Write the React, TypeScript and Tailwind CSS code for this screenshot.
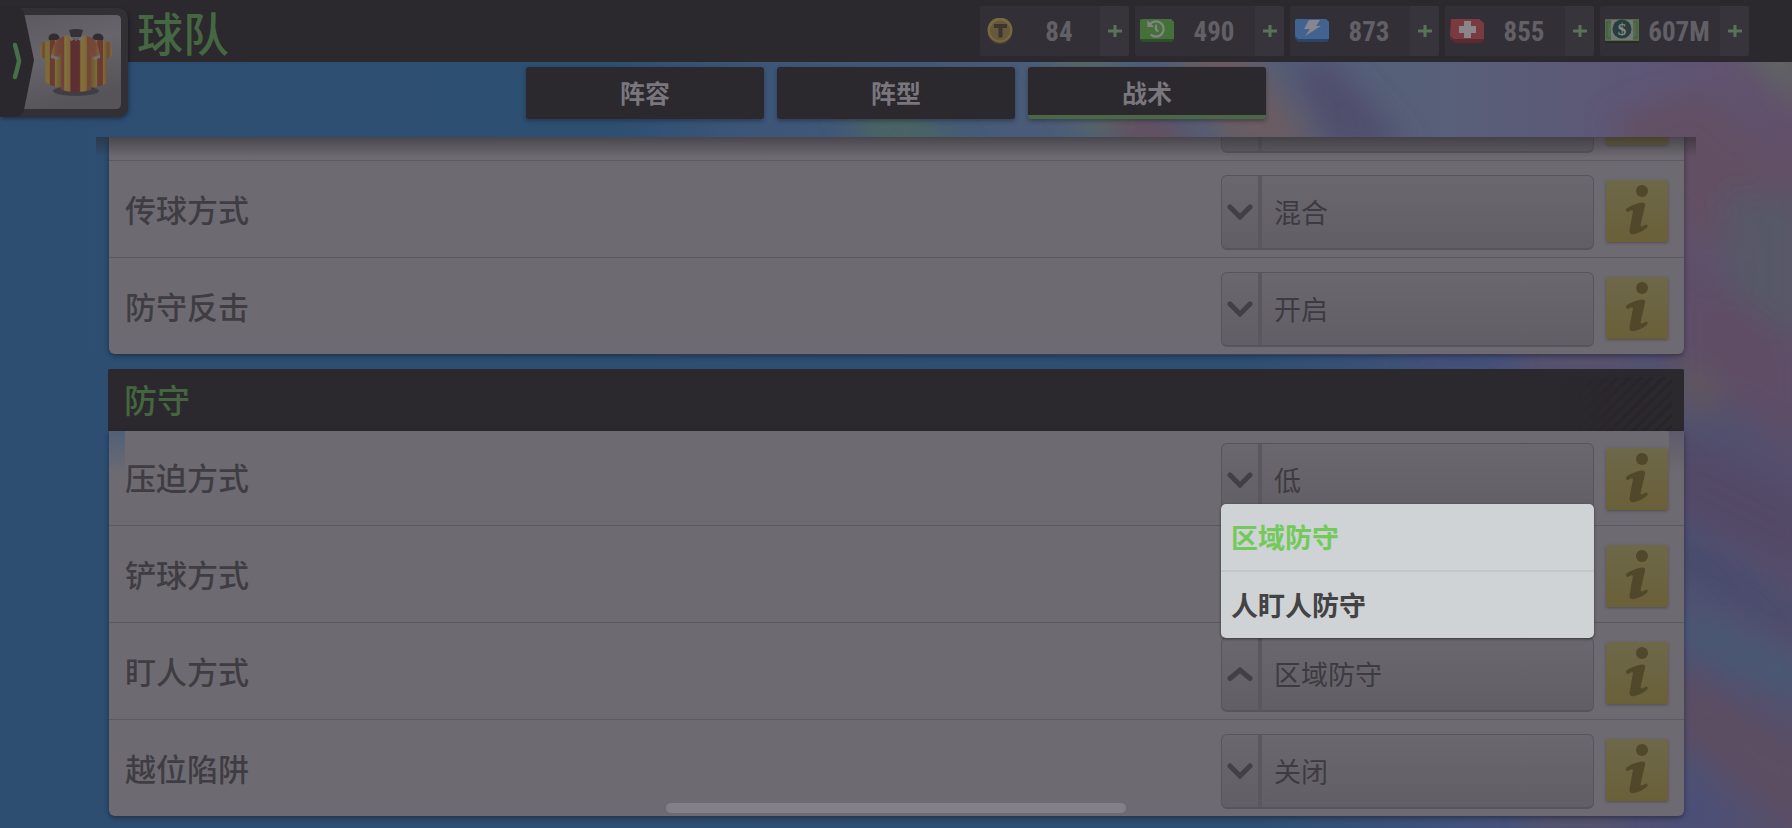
import React, { useState } from 'react';
import { FaHistory } from 'react-icons/fa';

const CoinIcon = () => (
  <svg viewBox="0 0 36 26" className="w-9 h-[26px]">
    <circle cx="16" cy="14" r="12" fill="#4e4433" />
    <circle cx="16" cy="12" r="12.5" fill="#77683f" />
    <circle cx="16" cy="12.5" r="10" fill="#66583a" />
    <path d="M10 6h13v4h-4.5v9.5h-4V10H10z" fill="#3c3532" />
  </svg>
);

const TimeIcon = () => (
  <span className="relative block w-9 h-[26px]">
    <svg viewBox="0 0 36 26" className="w-9 h-[26px]">
      <path d="M1 3q0-2 2-2h29l3 3v17l-2 3H3l-2-2z" fill="#2f4f2c" />
      <path d="M1 3q0-2 2-2h29l3 3v17H1z" fill="#45703a" />
    </svg>
    <FaHistory className="absolute left-2 top-0.5 text-[18px] text-[#7f8580]" />
  </span>
);

const EnergyIcon = () => (
  <svg viewBox="0 0 36 26" className="w-9 h-[26px]">
    <path d="M1 3q0-2 2-2h29l3 3v17l-2 3H4l-3-3z" fill="#2d4468" />
    <path d="M1 3q0-2 2-2h29l3 3v17H4l-3-3z" fill="#42638f" />
    <path d="M15 2h11l-4 6h5L11 18l5-7h-6z" fill="#86868f" />
  </svg>
);

const HealthIcon = () => (
  <svg viewBox="0 0 36 26" className="w-9 h-[26px]">
    <path d="M2 1h28l5 4v17l-2 3H6l-5-4z" fill="#592a30" />
    <path d="M2 1h28l5 4v16H5l-4-3z" fill="#7a3b40" />
    <path d="M15 3h7v5h5v7h-5v5h-7v-5h-5V8h5z" fill="#8b8588" />
  </svg>
);

const CashIcon = () => (
  <svg viewBox="0 0 36 26" className="w-9 h-[26px]">
    <path d="M1 23h34v2H1z" fill="#252b29" />
    <path d="M1 1h34v22H1z" fill="#536b48" />
    <path d="M3 4h30v16H3z" fill="none" stroke="#425c3c" />
    <path d="M7 2h22v20H7z" fill="#747679" />
    <circle cx="18" cy="11" r="9.5" fill="#263f3c" />
    <text x="18" y="17" textAnchor="middle" fontSize="17" fontWeight="700" fill="#85868a" fontFamily="Liberation Serif, serif">$</text>
  </svg>
);

const RESOURCES = [
  { name: 'T', value: '84', icon: <CoinIcon /> },
  { name: 'time', value: '490', icon: <TimeIcon /> },
  { name: 'energy', value: '873', icon: <EnergyIcon /> },
  { name: 'health', value: '855', icon: <HealthIcon /> },
  { name: 'cash', value: '607M', icon: <CashIcon /> },
];

const ATTACK_ROWS = [
  { id: 'focus', label: '', value: '' },
  { id: 'passing', label: '传球方式', value: '混合' },
  { id: 'counter', label: '防守反击', value: '开启' },
];

const DEFENCE_ROWS = [
  { id: 'pressing', label: '压迫方式', value: '低' },
  { id: 'tackling', label: '铲球方式', value: '普通' },
  { id: 'marking', label: '盯人方式', value: '区域防守', options: ['区域防守', '人盯人防守'] },
  { id: 'offside', label: '越位陷阱', value: '关闭' },
];

const Backdrop = () => (
  <svg
    aria-hidden="true"
    viewBox="0 0 1792 828"
    preserveAspectRatio="none"
    className="absolute inset-0 w-full h-full"
  >
    <defs>
      <linearGradient id="base" x1="0" x2="1">
        <stop offset="0" stopColor="#2d4e71" />
        <stop offset="0.34" stopColor="#2d4f72" />
        <stop offset="0.42" stopColor="#3c5678" />
        <stop offset="0.6" stopColor="#4b5c78" />
        <stop offset="0.8" stopColor="#586079" />
        <stop offset="0.92" stopColor="#5e5676" />
        <stop offset="1" stopColor="#62506a" />
      </linearGradient>
      <linearGradient id="low" x1="0" x2="1">
        <stop offset="0" stopColor="#2d4e71" />
        <stop offset="0.7" stopColor="#2d4f72" />
        <stop offset="0.82" stopColor="#43527a" />
        <stop offset="1" stopColor="#554f6c" />
      </linearGradient>
      <filter id="soft" x="-50%" y="-50%" width="200%" height="200%">
        <feGaussianBlur stdDeviation="15" />
      </filter>
    </defs>
    <rect width="1792" height="828" fill="url(#base)" />
    <rect y="355" width="1792" height="473" fill="url(#low)" />
    <g filter="url(#soft)">
      <path d="M840 105l70-5 60 60h-90z" fill="#4b6463" />
      <path d="M1040 50l70 0 30 90h-50z" fill="#566766" />
      <path d="M1100 110l60 0 50 50h-80z" fill="#65505f" />
      <path d="M1170 50l70-10 80 110h-90z" fill="#6c5c60" />
      <path d="M1290 60l40 0 80 90h-80z" fill="#4f4d6c" />
      <path d="M1610 120l90-30 92 80v90l-110-20z" fill="#624f64" />
      <path d="M1725 30h60l30 90z" fill="#5f6964" />
      <path d="M1725 190l85 10v140l-80-30z" fill="#575968" />
      <path d="M1670 230l60 60 80 60v100l-140-80z" fill="#5e4e66" />
      <path d="M1670 370l30-10 30 40-50 20z" fill="#60575f" />
      <path d="M1670 430l140 70v80l-140-70z" fill="#524a66" />
      <path d="M1670 530l140 90v20l-140-80z" fill="#444a6d" />
      <path d="M1670 600l140 60v50l-140-70z" fill="#4a5873" />
      <path d="M1670 660l140 90v90l-140-110z" fill="#5c4e62" />
      <path d="M1670 770l70 60h-70z" fill="#4a507a" />
      <path d="M1410 350h100v25h-100z" fill="#434f78" />
      <path d="M1520 350h120v25h-120z" fill="#5f5167" />
      <path d="M1530 815h90v20h-90z" fill="#5f5468" />
    </g>
  </svg>
);

const TeamButton = () => (
  <button
    aria-label="球队菜单"
    className="absolute left-0 top-2 w-32 h-[109px] bg-[#322f35] rounded-r-[10px] shadow-[1px_2px_4px_rgba(0,0,0,0.35)]"
  >
    <svg viewBox="0 0 128 109" className="w-32 h-[109px]">
      <defs>
        <linearGradient id="tile" x1="0" y1="0" x2="0.3" y2="1">
          <stop offset="0" stopColor="#5c5a60" />
          <stop offset="0.45" stopColor="#67656b" />
          <stop offset="1" stopColor="#565459" />
        </linearGradient>
        <linearGradient id="shirt" x1="0" x2="1">
          <stop offset="0" stopColor="#7d6939" />
          <stop offset="0.1" stopColor="#734a38" />
          <stop offset="0.26" stopColor="#713f36" />
          <stop offset="0.28" stopColor="#83703b" />
          <stop offset="0.38" stopColor="#7b6738" />
          <stop offset="0.41" stopColor="#5b2e31" />
          <stop offset="0.58" stopColor="#5e3032" />
          <stop offset="0.61" stopColor="#847039" />
          <stop offset="0.72" stopColor="#7d6938" />
          <stop offset="0.74" stopColor="#754537" />
          <stop offset="0.9" stopColor="#734a38" />
          <stop offset="1" stopColor="#7d6939" />
        </linearGradient>
        <linearGradient id="shirtBack" x1="0" x2="1">
          <stop offset="0" stopColor="#7d7239" />
          <stop offset="0.05" stopColor="#6e4934" />
          <stop offset="0.08" stopColor="#7b6c37" />
          <stop offset="0.13" stopColor="#7b6c37" />
          <stop offset="0.14" stopColor="#6b3a32" />
          <stop offset="0.2" stopColor="#6b3a32" />
          <stop offset="0.21" stopColor="#7d6d38" />
          <stop offset="0.28" stopColor="#6d5934" />
          <stop offset="0.72" stopColor="#6d5934" />
          <stop offset="0.79" stopColor="#7d6d38" />
          <stop offset="0.8" stopColor="#6b3a32" />
          <stop offset="0.87" stopColor="#6b3a32" />
          <stop offset="0.88" stopColor="#7b6c37" />
          <stop offset="0.95" stopColor="#6e4934" />
          <stop offset="1" stopColor="#7d7239" />
        </linearGradient>
      </defs>
      <path d="M24 7h92q5 0 5 5v84q0 5-5 5H24z" fill="url(#tile)" />
      <path d="M0 0h18q5 0 7 9l9 43-9 45q-2 12-8 12H0z" fill="#2a272d" />
      <path d="M15 37q4 15 4 16t-4 16" fill="none" stroke="#47704a" strokeWidth="4.5" strokeLinecap="round" />
      <ellipse cx="76" cy="83" rx="23" ry="5" fill="#403e44" />
      <ellipse cx="54" cy="30" rx="5.5" ry="4.5" fill="#302d33" />
      <ellipse cx="98" cy="30" rx="5.5" ry="4.5" fill="#302d33" />
      <path d="M41 35l9-3h52l9 3 1 13-5 3v24q-6 4-16 4H61q-10 0-16-5V51l-5-3z" fill="url(#shirtBack)" />
      <path d="M69 22q7-2 14 0l-2 7H71z" fill="#353137" />
      <path d="M67 27l-9 4q-5 4-7 17l7 3 3-6v37q15 4 30 0V45l3 6 6-3q-2-13-6-17l-9-4q-9 8-18 0z" fill="url(#shirt)" />
      <path d="M68 27l8 6 7-6-2 6-5-2-5 2zM51 47l8 2-1 3-7-2zM93 49l7-2v3l-6 2z" fill="#716e75" />
    </svg>
  </button>
);

const InfoButton = ({ label }: { label: string }) => (
  <button
    aria-label={`${label}说明`}
    className="shrink-0 w-[62px] h-[62px] rounded-xs bg-linear-to-b from-[#6d684a] to-[#6a6038] shadow-[0_1px_3px_rgba(60,55,60,0.6)]"
  >
    <svg viewBox="0 0 62 62" className="w-full h-full" fill="#51472a">
      <ellipse cx="36" cy="11" rx="6" ry="6" />
      <path d="M20 29q6-5 16-6.500 4 0 3 3.500l-4.500 19q0 3 5.500-.5 2 0 1.500 2.500-4.500 5-13 7-5.500 1-5-4l3.500-19q-1-2-5 1-2 .5-2-3z" />
    </svg>
  </button>
);

interface TacticRowProps {
  id: string;
  label: string;
  value: string;
  options?: string[];
}

const TacticRow: React.FC<TacticRowProps> = ({ id, label, value, options }) => {
  const [selected, setSelected] = useState(value);
  const open = Boolean(options);

  return (
    <div className="flex items-end h-[97px] px-4 pb-[7px] border-b border-[#5c5a60] first:h-[95px] last:h-24 last:border-b-0">
      <label htmlFor={id} className="flex-1 pb-[18px] text-[31px] leading-[46px] font-medium text-[#3f3d43]">
        {label}
      </label>
      <div className="relative w-[373px] h-[75px] mr-3 flex rounded-md border border-[#57555b] border-b-2 bg-linear-to-b from-[#6a686e] to-[#615f65]">
        <div className="w-10 shrink-0 flex items-center justify-center border-r-4 border-[#5a585e]">
          <svg viewBox="0 0 26 16" className="w-[26px] h-4" fill="none" stroke="#424046" strokeWidth="5" strokeLinecap="round">
            <path d={open ? 'M3 12.500L13 4l10 8.500' : 'M3 3l10 10L23 3'} />
          </svg>
        </div>
        <select
          id={id}
          value={selected}
          onChange={(e) => setSelected(e.target.value)}
          className="flex-1 min-w-0 appearance-none bg-transparent pl-3 text-[27px] text-[#3d3b41] outline-none"
        >
          {(options ?? [value]).map((o) => (
            <option key={o}>{o}</option>
          ))}
        </select>
        {options && (
          <ul className="absolute z-20 -left-px -right-px bottom-full rounded-[5px] overflow-hidden bg-[#cfd3d6] shadow-[0_1px_3px_rgba(0,0,0,0.5)]">
            {options.map((o) => (
              <li key={o} className="border-t-2 border-[#c3c7ca] first:border-t-0">
                <button
                  onClick={() => setSelected(o)}
                  className={`block w-full h-[66px] px-2.5 text-left text-[27px] font-bold ${
                    o === selected ? 'text-[#73ca5b]' : 'text-[#434343]'
                  }`}
                >
                  {o}
                </button>
              </li>
            ))}
          </ul>
        )}
      </div>
      <div className="flex pb-2">
        <InfoButton label={label} />
      </div>
    </div>
  );
};

export default function App() {
  const [tab, setTab] = useState('战术');

  return (
    <div className="relative h-screen flex flex-col overflow-hidden bg-[#2d4f72] font-['Noto_Sans_CJK_SC',sans-serif]">
      <Backdrop />

      <header className="relative z-10 h-[62px] shrink-0 flex items-center justify-between pl-[137px] pr-[43px] bg-[#2b282e]">
        <TeamButton />
        <h1 className="text-[46px] leading-[60px] font-medium text-[#456741]">球队</h1>
        <div className="flex gap-1.5">
          {RESOURCES.map((r) => (
            <div key={r.name} className="w-[149px] h-[50px] flex items-center rounded-xs bg-[#323036]">
              <div className="w-10 pl-1 shrink-0 flex justify-center">{r.icon}</div>
              <span className="flex-1 pt-0.5 pr-0.5 text-center text-[27px] leading-[50px] font-bold text-[#626066] font-['Liberation_Sans_Narrow','Roboto_Condensed','Liberation_Sans',sans-serif]">
                {r.value}
              </span>
              <button aria-label={`${r.name} +`} className="w-[29px] h-full flex items-center justify-center bg-[#37353b] rounded-r-xs">
                <svg viewBox="0 0 14 14" className="w-3.5 h-3.5" stroke="#587357" strokeWidth="3">
                  <path d="M7 1v12M0 7h14" />
                </svg>
              </button>
            </div>
          ))}
        </div>
      </header>

      <nav className="relative shrink-0 h-[75px] flex justify-center gap-[13px] pt-[5px]">
        {['阵容', '阵型', '战术'].map((t) => (
          <button
            key={t}
            onClick={() => setTab(t)}
            className={`w-[238px] h-[52px] rounded-[3px] bg-[#2b282e] text-[25px] font-bold text-[#79777d] shadow-[0_2px_4px_rgba(20,20,30,0.4)] ${
              tab === t ? 'border-b-4 border-[#4b6846] pt-1' : ''
            }`}
          >
            {t}
          </button>
        ))}
      </nav>

      <main className="relative flex-1 min-h-0 flex flex-col justify-end gap-[15px] overflow-hidden px-[108px] pb-3">
        <section className="ml-px shrink-0 rounded-b-md bg-[#6d6b71] shadow-[0_2px_5px_rgba(20,20,35,0.5)]">
          {ATTACK_ROWS.map((r) => (
            <TacticRow key={r.id} {...r} />
          ))}
        </section>

        <section className="shrink-0">
          <div className="h-[62px] flex items-stretch justify-between pl-4 pr-3 rounded-t-xs bg-[#2b282e]">
            <h2 className="text-[33px] leading-[60px] font-medium text-[#446640]">防守</h2>
            <div className="w-28 mt-2 bg-[repeating-linear-gradient(135deg,#27242a_0px,#27242a_3px,#2b282e_3px,#2b282e_8px)] mask-l-from-20%" />
          </div>
          <div className="relative ml-px rounded-b-md bg-[#6d6b71] shadow-[0_2px_5px_rgba(20,20,35,0.5)]">
            <div className="absolute left-0 top-0 w-4 h-11 bg-linear-to-b from-[#4f6078] to-[#6d6b71]" />
            <div className="absolute right-0 top-0 w-[15px] h-11 bg-linear-to-b from-[#5f5a6b] to-[#6d6b71]" />
            <div className="relative">
              {DEFENCE_ROWS.map((r) => (
                <TacticRow key={r.id} {...r} />
              ))}
            </div>
          </div>
        </section>

        <div className="absolute top-0 inset-x-24 h-5 bg-linear-to-b from-[#2b282e]/55 to-transparent" />
      </main>

      <div className="absolute z-30 bottom-[15px] left-1/2 -translate-x-1/2 w-[460px] h-2.5 rounded-full bg-[#838187]" />
    </div>
  );
}
